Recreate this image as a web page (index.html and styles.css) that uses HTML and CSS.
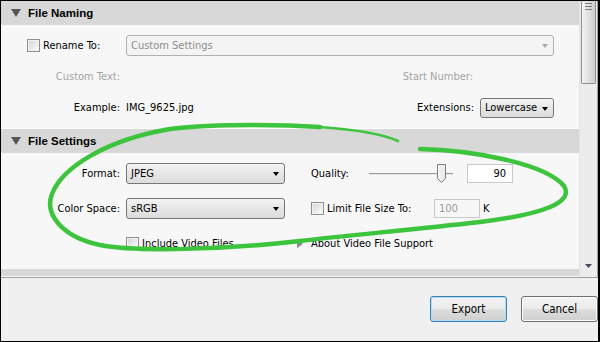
FILE: index.html
```html
<!DOCTYPE html>
<html lang="en">
<head>
    <meta charset="UTF-8"/>
    <title>Export</title>
    <link rel="stylesheet" href="styles.css">
</head>
<body>
<div class="window">
    <div class="pane">
        <div class="content">
            <div class="sec-head">
                <svg class="twisty" width="10" height="8" viewBox="0 0 10 8"><polygon points="0,0 10,0 5,8" fill="#555"/></svg>
                File Naming
            </div>
            <div class="sec-body naming">
                <div class="row">
                    <label class="lead"><span class="check"></span>Rename To:</label>
                    <div class="select disabled rename">Custom Settings<span class="arrow"></span></div>
                </div>
                <div class="row">
                    <span class="lbl muted">Custom Text:</span>
                    <span class="start-lbl muted">Start Number:</span>
                </div>
                <div class="row">
                    <span class="lbl">Example:</span>
                    <span>IMG_9625.jpg</span>
                    <span class="ext-lbl">Extensions:</span>
                    <div class="select ext">Lowercase<span class="arrow"></span></div>
                </div>
            </div>

            <div class="sec-head">
                <svg class="twisty" width="10" height="8" viewBox="0 0 10 8"><polygon points="0,0 10,0 5,8" fill="#555"/></svg>
                File Settings
            </div>
            <div class="sec-body settings">
                <div class="row">
                    <span class="lbl">Format:</span>
                    <div class="select col2">JPEG<span class="arrow"></span></div>
                    <span class="col3 quality-lbl">Quality:</span>
                    <div class="slider">
                        <svg class="thumb" width="11" height="21" viewBox="0 0 11 21">
                            <path d="M1.5 1.5 h8 v14 l-4 4 l-4 -4 z" fill="#eeeeee" stroke="#7a7a7a"/>
                            <path d="M2.5 3 v12" stroke="#ffffff"/>
                        </svg>
                    </div>
                    <div class="field">90</div>
                </div>
                <div class="row">
                    <span class="lbl">Color Space:</span>
                    <div class="select col2">sRGB<span class="arrow"></span></div>
                    <label class="col3 limit-lbl"><span class="check"></span>Limit File Size To:</label>
                    <div class="field disabled">100</div>
                    <span class="unit">K</span>
                </div>
                <div class="row">
                    <span class="lbl"></span>
                    <label class="col2 video"><span class="check"></span>Include Video Files</label>
                    <svg class="disclose" width="6" height="8" viewBox="0 0 6 8"><polygon points="0,0 6,4 0,8" fill="#8a8a8a"/></svg>
                    <span class="about">About Video File Support</span>
                </div>
            </div>

            <div class="sec-head peek"></div>
        </div>
        <div class="scrollbar">
            <div class="scroll-thumb"><span class="grip"></span></div>
            <svg class="scroll-down" width="7" height="4" viewBox="0 0 7 4"><polygon points="0,0 7,0 3.5,4" fill="#4a4a5a"/></svg>
        </div>
    </div>

    <div class="footer">
        <button class="btn default">Export</button>
        <button class="btn">Cancel</button>
    </div>

    <!-- hand drawn highlight over the file settings -->
    <svg class="scribble" width="600" height="342" viewBox="0 0 600 342">
        <path d="M420 149 C470 150 545 163 564 186 C574 202 545 214 480 222 C410 230 340 236 300 241 C240 248 140 253 100 245 C62 237 44 214 52 194 C62 168 105 140 170 129 C220 123 290 125 320 127"
              fill="none" stroke="#3cc43c" stroke-width="4.5" stroke-linecap="round"/>
        <path d="M318 127 C350 129 380 133 398 141"
              fill="none" stroke="#3cc43c" stroke-width="2.5" stroke-linecap="round"/>
    </svg>
</div>
</body>
</html>
```

FILE: styles.css
```css
body{margin:0;font-family:"DejaVu Sans Condensed","Liberation Sans",sans-serif;font-size:11px;color:#000}

.window{
    position:relative;
    width:600px;height:342px;
    box-sizing:border-box;
    border:1px solid #000;border-right-width:2px;
    background:#f0f0f0;
    display:flex;flex-direction:column;
    overflow:hidden;
}

/* scrolling panel */
.pane{height:276px;display:flex;border-bottom:1px solid #a0a0a0;border-right:1px solid #a0a0a0;flex-shrink:0}
.content{width:578px;background:#f7f7f7;overflow:hidden}

.sec-head{
    height:24px;background:#d8d8d8;
    display:flex;align-items:center;
    font-family:"Liberation Sans",sans-serif;font-weight:bold;font-size:11.5px;
}
.sec-head .twisty{margin:0 7px 0 10px}
.sec-head.peek{height:7px}

.sec-body{padding:10px 0}
.naming{border-bottom:1px solid #fdfdfd;padding-right:25px}
.settings{padding-bottom:15px}

.row{display:flex;align-items:center;height:21px;white-space:nowrap}
.naming .row + .row{margin-top:10px}
.settings .row + .row{margin-top:14px}

.lbl{width:119px;margin-right:6px;text-align:right;flex-shrink:0}
.muted{color:#a3a3a3}
.lead{width:99px;margin-left:26px;display:flex;align-items:center}
.start-lbl{margin-left:auto;margin-right:81px}
.ext-lbl{margin-left:auto;margin-right:6px}

.check{
    width:11px;height:11px;margin-right:3px;flex-shrink:0;
    border:1px solid #8e8f8f;
    background:linear-gradient(135deg,#d4d4d4,#f6f6f6 80%);
    box-shadow:inset 0 0 0 1px #f2f2f2;
}

/* drop downs */
.select{
    position:relative;box-sizing:border-box;height:21px;
    display:flex;align-items:center;padding-left:4px;
    border:1px solid #777;border-radius:3px;
    background:linear-gradient(#f4f4f4,#e6e6e6 50%,#dcdcdc);
}
.select .arrow{
    position:absolute;right:5px;top:8px;
    border-left:3.5px solid transparent;border-right:3.5px solid transparent;border-top:4px solid #000;
}
.select.disabled{border-color:#b0b0b0;background:#f4f4f4;color:#8c8c8c}
.select.disabled .arrow{border-top-color:#a8a8a8}
.rename{width:428px}
.ext{width:74px;height:20px}
.col2{width:159px;flex-shrink:0}
.col3{margin-left:26px}

.quality-lbl{width:58px}
.slider{position:relative;width:84px;height:21px;flex-shrink:0}
.slider:before{
    content:"";position:absolute;left:0;right:0;top:10px;height:1px;
    background:#9a9a9a;border-bottom:1px solid #e4e4e4;
}
.slider .thumb{position:absolute;left:67px;top:0}

.field{
    box-sizing:border-box;width:46px;height:19px;margin-left:14px;
    border:1px solid #c8c8c8;background:#fff;
    text-align:right;padding-right:6px;line-height:17px;
}
.limit-lbl{display:flex;align-items:center;width:123px}
.field.disabled{margin-left:0;background:#f7f7f7;color:#9a9a9a;text-align:left;padding-left:4px}
.unit{margin-left:3px}

.video{display:flex;align-items:center}
.disclose{margin-left:12px;margin-right:8px}

/* scroll bar */
.scrollbar{position:relative;width:17px;background:#ececec;border-left:1px solid #e2e2e2}
.scroll-thumb{
    position:absolute;left:1px;top:0;width:13px;height:82px;
    border:1px solid #8f8f8f;border-top:none;border-radius:0 0 2px 2px;
    background:linear-gradient(90deg,#f2f2f2,#dcdcdc 60%,#cfcfcf);
}
.grip{
    position:absolute;left:3px;top:2px;width:7px;height:5px;
    border-top:1px solid #7c7c7c;border-bottom:1px solid #7c7c7c;
}
.grip:after{content:"";position:absolute;left:0;right:0;top:2px;height:1px;background:#7c7c7c}
.scroll-down{position:absolute;left:5px;bottom:9px}

/* dialog buttons */
.footer{flex:1;display:flex;justify-content:flex-end;align-items:center;gap:14px;padding-right:0;padding-bottom:2px}
.btn{
    width:77px;height:26px;
    font:11.5px "DejaVu Sans Condensed","Liberation Sans",sans-serif;
    border:1px solid #707070;border-radius:3px;
    background:linear-gradient(#f3f3f3,#ebebeb 50%,#dddddd 51%,#cfcfcf);
    box-shadow:inset 0 0 0 1px #fcfcfc;
}
.btn.default{border-color:#3c7fb1;box-shadow:inset 0 0 0 1px #aee0f7}

.scribble{position:absolute;left:-1px;top:-1px;pointer-events:none}
```
